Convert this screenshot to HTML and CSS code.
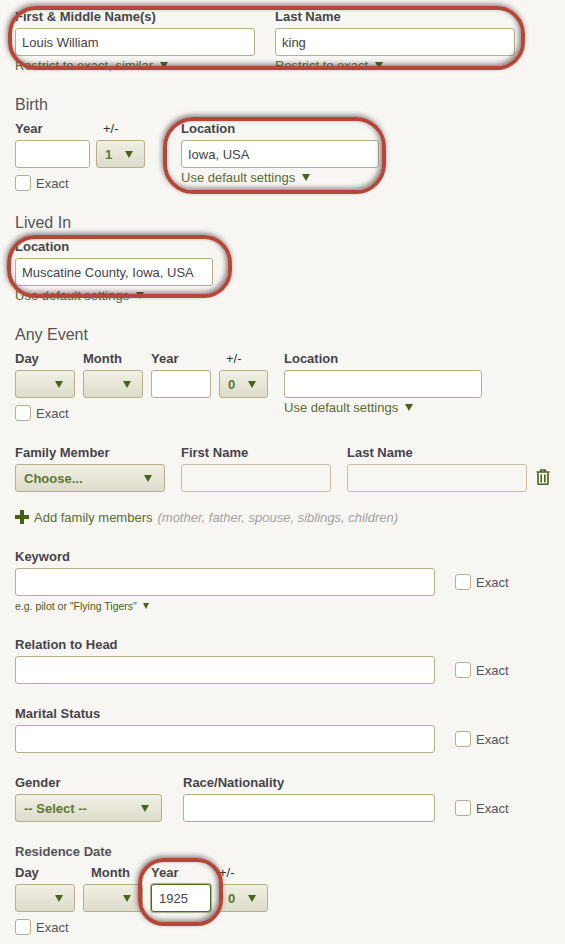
FILE: index.html
```html
<!DOCTYPE html>
<html lang="en">
<head>
    <meta charset="UTF-8">
    <meta name="viewport" content="width=device-width, initial-scale=1.0">
    <title>Search</title>
    <link rel="stylesheet" href="styles.css">
</head>
<body>
    <div class="page">
        <!-- name -->
        <div class="row">
            <div class="field w-240">
                <label class="label">First &amp; Middle Name(s)</label>
                <input class="input" type="text" value="Louis William">
                <div class="hint">Restrict to exact, similar <i class="caret"></i></div>
            </div>
            <div class="field w-240 gap-20">
                <label class="label">Last Name</label>
                <input class="input" type="text" value="king">
                <div class="hint">Restrict to exact <i class="caret"></i></div>
            </div>
        </div>

        <!-- birth -->
        <div class="section-title">Birth</div>
        <div class="row">
            <div>
                <div class="row">
                    <div class="field w-75">
                        <label class="label">Year</label>
                        <input class="input" type="text">
                    </div>
                    <div class="field w-49 gap-6">
                        <label class="label plain inset">+/-</label>
                        <div class="select"><span>1</span><i class="caret"></i></div>
                    </div>
                </div>
                <div class="exact under"><input class="check" type="checkbox"><span>Exact</span></div>
            </div>
            <div class="field w-198 gap-36">
                <label class="label">Location</label>
                <input class="input" type="text" value="Iowa, USA">
                <div class="hint">Use default settings <i class="caret"></i></div>
            </div>
        </div>

        <!-- lived in -->
        <div class="section-title">Lived In</div>
        <div class="field w-198">
            <label class="label">Location</label>
            <input class="input" type="text" value="Muscatine County, Iowa, USA">
            <div class="hint">Use default settings <i class="caret"></i></div>
        </div>

        <!-- any event -->
        <div class="section-title">Any Event</div>
        <div class="row">
            <div>
                <div class="row">
                    <div class="field w-60">
                        <label class="label">Day</label>
                        <div class="select"><span></span><i class="caret"></i></div>
                    </div>
                    <div class="field w-60 gap-8">
                        <label class="label">Month</label>
                        <div class="select"><span></span><i class="caret"></i></div>
                    </div>
                    <div class="field w-60 gap-8">
                        <label class="label">Year</label>
                        <input class="input" type="text">
                    </div>
                    <div class="field w-49 gap-8">
                        <label class="label plain inset">+/-</label>
                        <div class="select"><span>0</span><i class="caret"></i></div>
                    </div>
                </div>
                <div class="exact under"><input class="check" type="checkbox"><span>Exact</span></div>
            </div>
            <div class="field w-198 gap-16">
                <label class="label">Location</label>
                <input class="input" type="text">
                <div class="hint">Use default settings <i class="caret"></i></div>
            </div>
        </div>

        <!-- family -->
        <div class="row block">
            <div class="field w-150">
                <label class="label">Family Member</label>
                <div class="select wide"><span>Choose...</span><i class="caret"></i></div>
            </div>
            <div class="field w-150 gap-16">
                <label class="label">First Name</label>
                <input class="input empty" type="text">
            </div>
            <div class="field w-180 gap-16">
                <label class="label">Last Name</label>
                <input class="input empty" type="text">
            </div>
            <svg class="trash" viewBox="0 0 14 16" width="14" height="16">
                <path d="M0.5 3h13 M4.8 3V1h4.4v2" fill="none" stroke="#4a621c" stroke-width="1.6"/>
                <path d="M2 3.5v11a0.8 0.8 0 0 0 0.8 0.8h8.4a0.8 0.8 0 0 0 0.8-0.8v-11 M5.2 5.5v8 M8.8 5.5v8" fill="none" stroke="#4a621c" stroke-width="1.6"/>
            </svg>
        </div>
        <div class="add-family">
            <svg class="plus" viewBox="0 0 14 14" width="14" height="14">
                <path d="M5 0h4v5h5v4H9v5H5V9H0V5h5z" fill="#44601a"/>
            </svg>
            <span class="add-link">Add family members</span>
            <em class="add-note">(mother, father, spouse, siblings, children)</em>
        </div>

        <!-- keyword -->
        <div class="row block">
            <div class="field w-420">
                <label class="label">Keyword</label>
                <input class="input" type="text">
                <div class="hint small">e.g. pilot or "Flying Tigers" <i class="caret tiny"></i></div>
            </div>
            <div class="exact side"><input class="check" type="checkbox"><span>Exact</span></div>
        </div>

        <div class="row next">
            <div class="field w-420">
                <label class="label">Relation to Head</label>
                <input class="input" type="text">
            </div>
            <div class="exact side"><input class="check" type="checkbox"><span>Exact</span></div>
        </div>

        <div class="row next">
            <div class="field w-420">
                <label class="label">Marital Status</label>
                <input class="input" type="text">
            </div>
            <div class="exact side"><input class="check" type="checkbox"><span>Exact</span></div>
        </div>

        <div class="row next">
            <div class="field w-147">
                <label class="label">Gender</label>
                <div class="select wide"><span>-- Select --</span><i class="caret"></i></div>
            </div>
            <div class="field w-252 gap-21">
                <label class="label">Race/Nationality</label>
                <input class="input" type="text">
            </div>
            <div class="exact side"><input class="check" type="checkbox"><span>Exact</span></div>
        </div>

        <!-- residence date -->
        <div class="group-label">Residence Date</div>
        <div class="row">
            <div class="field w-60">
                <label class="label">Day</label>
                <div class="select"><span></span><i class="caret"></i></div>
            </div>
            <div class="field w-60 gap-8">
                <label class="label inset-month">Month</label>
                <div class="select"><span></span><i class="caret"></i></div>
            </div>
            <div class="field w-60 gap-8">
                <label class="label">Year</label>
                <input class="input focused" type="text" value="1925">
            </div>
            <div class="field w-49 gap-8">
                <label class="label plain">+/-</label>
                <div class="select"><span>0</span><i class="caret"></i></div>
            </div>
        </div>
        <div class="exact under"><input class="check" type="checkbox"><span>Exact</span></div>

        <!-- red marks drawn over the form -->
        <div class="mark mark-name"></div>
        <div class="mark mark-birth"></div>
        <div class="mark mark-lived"></div>
        <div class="mark mark-year"></div>
    </div>
</body>
</html>
```

FILE: styles.css
```css
* {
    margin: 0;
    padding: 0;
    box-sizing: border-box;
    font-family: "Liberation Sans", Arial, sans-serif;
}

html, body {
    height: 944px;
    overflow: hidden;
}

body {
    background-color: #f8f6f3;
    color: #45434a;
    font-size: 13px;
}

.page {
    position: relative;
    height: 944px;
    padding: 8px 15px 0;
}

.row {
    display: flex;
    align-items: flex-start;
}

.block {
    margin-top: 23px;
}

.next {
    margin-top: 21px;
}

.field {
    display: flex;
    flex-direction: column;
    flex-shrink: 0;
}

.w-49 { width: 49px; }
.w-60 { width: 60px; }
.w-75 { width: 75px; }
.w-147 { width: 147px; }
.w-150 { width: 150px; }
.w-180 { width: 180px; }
.w-198 { width: 198px; }
.w-240 { width: 240px; }
.w-252 { width: 252px; }
.w-420 { width: 420px; }

.gap-6 { margin-left: 6px; }
.gap-8 { margin-left: 8px; }
.gap-16 { margin-left: 16px; }
.gap-20 { margin-left: 20px; }
.gap-21 { margin-left: 21px; }
.gap-36 { margin-left: 36px; }

.label {
    display: block;
    height: 16px;
    line-height: 18px;
    margin-bottom: 4px;
    font-weight: bold;
    color: #46444b;
    white-space: nowrap;
}

.label.plain {
    font-weight: normal;
    color: #333;
}

.label.inset {
    padding-left: 7px;
}

.label.inset-month {
    padding-left: 8px;
}

.section-title {
    height: 20px;
    line-height: 22px;
    margin-top: 21px;
    margin-bottom: 6px;
    font-size: 16px;
    color: #55535a;
}

.group-label {
    height: 16px;
    line-height: 18px;
    margin-top: 21px;
    margin-bottom: 5px;
    font-weight: bold;
    color: #55535a;
}

.input {
    display: block;
    width: 100%;
    height: 28px;
    padding: 0 6px;
    border: 1px solid #b9ae8c;
    border-radius: 3px;
    background-color: #fff;
    color: #45434a;
    font-size: 13px;
}

.input.empty {
    background-color: #f8f6f3;
    border-color: #c8c0a4;
}

.input.focused {
    padding: 0 7px;
    border-color: #4f6b1e;
    box-shadow: 0 0 1px 1px rgba(79, 107, 30, 0.5);
}

.select {
    display: flex;
    align-items: center;
    justify-content: space-between;
    height: 28px;
    padding: 0 9px 0 8px;
    border: 1px solid #b9ae8c;
    border-radius: 3px;
    background: linear-gradient(#f0f0e3, #dddccb);
    color: #5d7632;
    font-size: 13px;
    font-weight: bold;
}

.select.wide {
    padding-right: 10px;
}

.caret {
    display: inline-block;
    width: 0;
    height: 0;
    border-left: 4px solid transparent;
    border-right: 4px solid transparent;
    border-top: 7px solid #4a621c;
    margin-right: 2px;
}

.caret.tiny {
    border-left-width: 3px;
    border-right-width: 3px;
    border-top-width: 6px;
    margin-left: 2px;
}

.hint {
    height: 16px;
    line-height: 18px;
    margin-top: 1px;
    color: #5b6b32;
    white-space: nowrap;
}

.hint .caret {
    margin-left: 3px;
    vertical-align: 1px;
}

.hint.small {
    height: 17px;
    line-height: 17px;
    margin-top: 2px;
    font-size: 10.5px;
    color: #4b5a22;
}

.exact {
    display: flex;
    align-items: center;
    gap: 5px;
    color: #55535a;
}

.exact.under {
    height: 16px;
    margin-top: 7px;
}

.exact.side {
    height: 28px;
    margin-top: 20px;
    margin-left: 20px;
}

.check {
    appearance: none;
    width: 16px;
    height: 16px;
    border: 1px solid #b9ae8c;
    border-radius: 3px;
    background-color: #fff;
}

.trash {
    margin-left: 9px;
    margin-top: 25px;
}

.add-family {
    display: flex;
    align-items: center;
    height: 16px;
    margin-top: 17px;
}

.add-link {
    margin-left: 5px;
    color: #5b6b32;
}

.add-note {
    margin-left: 5px;
    color: #a3a1a1;
}

.mark {
    position: absolute;
    border: 4px solid #b4473a;
    box-shadow: -1px -2px 5px rgba(60, 60, 60, 0.6), inset -2px -2px 5px rgba(60, 60, 60, 0.6);
}

.mark-name {
    left: 8px;
    top: 6px;
    width: 517px;
    height: 64px;
    border-radius: 28px;
}

.mark-birth {
    left: 163px;
    top: 117px;
    width: 223px;
    height: 77px;
    border-radius: 30px;
}

.mark-lived {
    left: 7px;
    top: 235px;
    width: 225px;
    height: 63px;
    border-radius: 28px;
}

.mark-year {
    left: 138px;
    top: 858px;
    width: 85px;
    height: 68px;
    border-radius: 26px;
}
```
